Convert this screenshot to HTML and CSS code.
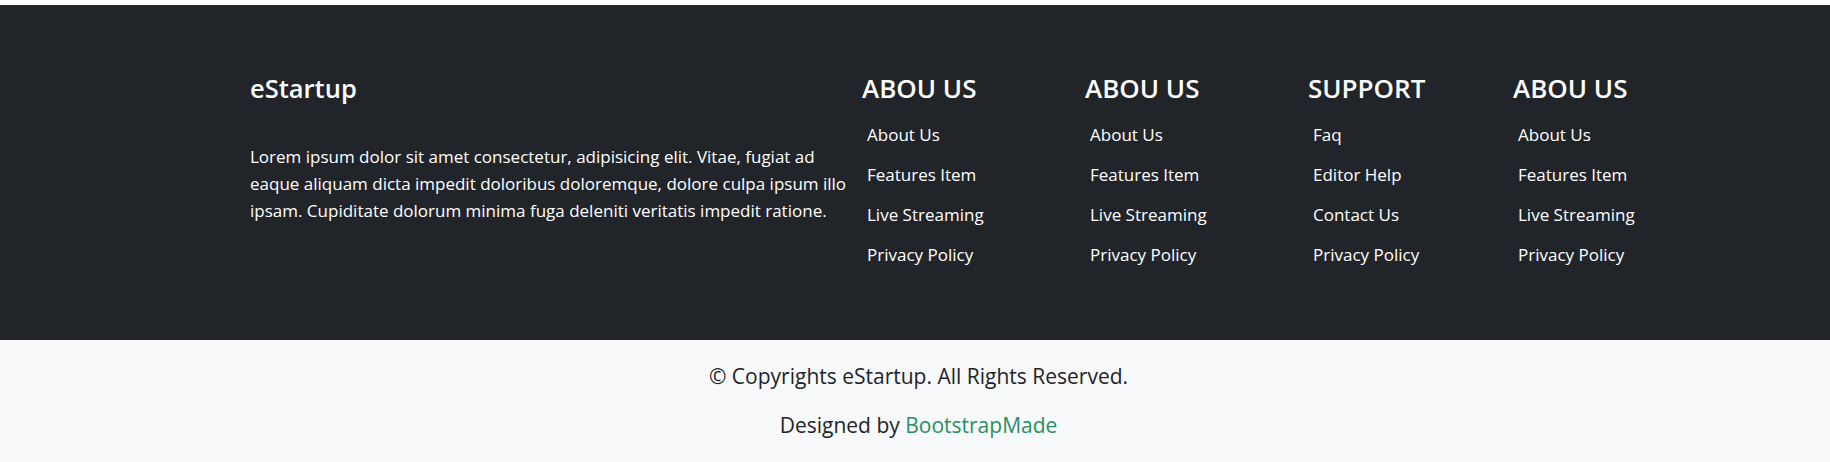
FILE: index.html
```html
<!DOCTYPE html>
<html lang="en">
<head>
<meta charset="utf-8">
<title>eStartup Footer</title>
<link rel="stylesheet" href="styles.css">
</head>
<body>
<div class="page">
  <footer class="footer">
    <div class="footer-top">
      <div class="container">
        <div class="col col-brand">
          <h3 class="brand">eStartup</h3>
          <p class="about-text">Lorem ipsum dolor sit amet consectetur, adipisicing elit. Vitae, fugiat ad eaque aliquam dicta impedit doloribus doloremque, dolore culpa ipsum illo ipsam. Cupiditate dolorum minima fuga deleniti veritatis impedit ratione.</p>
        </div>
        <div class="col col-links col-a">
          <h4 class="col-title">ABOU US</h4>
          <ul class="link-list">
            <li><a href="#">About Us</a></li>
            <li><a href="#">Features Item</a></li>
            <li><a href="#">Live Streaming</a></li>
            <li><a href="#">Privacy Policy</a></li>
          </ul>
        </div>
        <div class="col col-links col-b">
          <h4 class="col-title">ABOU US</h4>
          <ul class="link-list">
            <li><a href="#">About Us</a></li>
            <li><a href="#">Features Item</a></li>
            <li><a href="#">Live Streaming</a></li>
            <li><a href="#">Privacy Policy</a></li>
          </ul>
        </div>
        <div class="col col-links col-c">
          <h4 class="col-title">SUPPORT</h4>
          <ul class="link-list">
            <li><a href="#">Faq</a></li>
            <li><a href="#">Editor Help</a></li>
            <li><a href="#">Contact Us</a></li>
            <li><a href="#">Privacy Policy</a></li>
          </ul>
        </div>
        <div class="col col-links col-d">
          <h4 class="col-title">ABOU US</h4>
          <ul class="link-list">
            <li><a href="#">About Us</a></li>
            <li><a href="#">Features Item</a></li>
            <li><a href="#">Live Streaming</a></li>
            <li><a href="#">Privacy Policy</a></li>
          </ul>
        </div>
      </div>
    </div>
    <div class="copyrights">
      <p class="copy-line">© Copyrights eStartup. All Rights Reserved.</p>
      <p class="credit-line">Designed by <a href="#" class="credit-link">BootstrapMade</a></p>
    </div>
  </footer>
</div>
</body>
</html>
```
FILE: styles.css
```css
html, body {
  margin: 0;
  padding: 0;
  background: #ffffff;
}

body {
  font-family: "Open Sans", "Noto Sans", "Liberation Sans", sans-serif;
  color: #212529;
}

.page {
  padding-top: 5px;
}

.footer-top {
  background: #212529;
  padding: 67px 0 65px;
}

.container {
  padding-left: 250px;
  display: flex;
  align-items: flex-start;
}

.col {
  flex: none;
  white-space: nowrap;
}

.col-brand {
  width: 612px;
  white-space: normal;
}

.col-a, .col-b {
  width: 223px;
}

.col-c {
  width: 205px;
}

.col-d {
  width: 220px;
}

.brand {
  margin: 0;
  font-size: 25.5px;
  font-weight: 600;
  line-height: 32px;
  color: #ffffff;
}

.about-text {
  margin: 39px 0 0;
  width: 605px;
  font-size: 17px;
  line-height: 27px;
  color: #ffffff;
}

.col-title {
  margin: 0 0 11px;
  font-size: 26px;
  font-weight: 600;
  line-height: 32px;
  color: #ffffff;
}

.link-list {
  list-style: none;
  margin: 0;
  padding: 0 0 0 5px;
}

.link-list li {
  font-size: 17px;
  line-height: 40px;
}

.link-list a {
  color: #ffffff;
  text-decoration: none;
}

.copyrights {
  background: #f8f9fa;
  padding: 22px 0 22px 7px;
  text-align: center;
}

.copy-line,
.credit-line {
  margin: 0;
  font-size: 21px;
  line-height: 29px;
  color: #212529;
}

.credit-line {
  margin-top: 20px;
}

.credit-link {
  color: #2a8f63;
  text-decoration: none;
}
```
